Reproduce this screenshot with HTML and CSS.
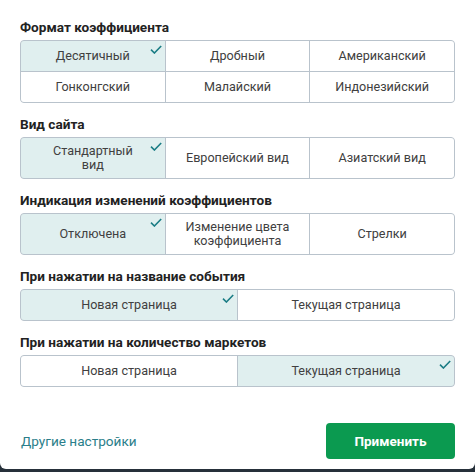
FILE: index.html
```html
<!DOCTYPE html>
<html lang="ru">
<head>
<meta charset="utf-8">
<title>Настройки</title>
<link rel="stylesheet" href="styles.css">
</head>
<body>
<div class="panel">
  <section class="group">
    <h3 class="title">Формат коэффициента</h3>
    <div class="opts cols3">
      <div class="opt sel">Десятичный<svg class="check" viewBox="0 0 12 9"><path d="M1 4.6 L4.4 8 L11.2 1"/></svg></div>
      <div class="opt">Дробный</div>
      <div class="opt">Американский</div>
      <div class="opt">Гонконгский</div>
      <div class="opt">Малайский</div>
      <div class="opt">Индонезийский</div>
    </div>
  </section>
  <section class="group">
    <h3 class="title">Вид сайта</h3>
    <div class="opts cols3 tall">
      <div class="opt sel">Стандартный<br>вид<svg class="check" viewBox="0 0 12 9"><path d="M1 4.6 L4.4 8 L11.2 1"/></svg></div>
      <div class="opt">Европейский вид</div>
      <div class="opt">Азиатский вид</div>
    </div>
  </section>
  <section class="group">
    <h3 class="title">Индикация изменений коэффициентов</h3>
    <div class="opts cols3 tall">
      <div class="opt sel">Отключена<svg class="check" viewBox="0 0 12 9"><path d="M1 4.6 L4.4 8 L11.2 1"/></svg></div>
      <div class="opt">Изменение цвета<br>коэффициента</div>
      <div class="opt">Стрелки</div>
    </div>
  </section>
  <section class="group">
    <h3 class="title">При нажатии на название события</h3>
    <div class="opts cols2">
      <div class="opt sel">Новая страница<svg class="check" viewBox="0 0 12 9"><path d="M1 4.6 L4.4 8 L11.2 1"/></svg></div>
      <div class="opt">Текущая страница</div>
    </div>
  </section>
  <section class="group">
    <h3 class="title">При нажатии на количество маркетов</h3>
    <div class="opts cols2">
      <div class="opt">Новая страница</div>
      <div class="opt sel">Текущая страница<svg class="check" viewBox="0 0 12 9"><path d="M1 4.6 L4.4 8 L11.2 1"/></svg></div>
    </div>
  </section>
  <footer class="footer">
    <a class="more" href="#">Другие настройки</a>
    <button class="apply" type="button">Применить</button>
  </footer>
</div>
</body>
</html>
```

FILE: styles.css
```css
html, body {
  margin: 0;
  padding: 0;
}
body {
  background: #26303a;
  font-family: Roboto, "Liberation Sans", Arial, sans-serif;
  width: 475px;
  height: 472px;
  overflow: hidden;
}
.panel {
  box-sizing: border-box;
  width: 475px;
  height: 469px;
  background: #fff;
  border-radius: 0 0 6px 6px;
  padding: 19px 20px 0 20px;
  display: flex;
  flex-direction: column;
}
.group {
  margin-bottom: 13px;
}
.title {
  margin: 0 0 5px 0;
  font-size: 13.6px;
  line-height: 16px;
  font-weight: 700;
  color: #222;
}
.opts {
  display: grid;
  gap: 1px;
  background: #b9c3cc;
  border: 1px solid #b9c3cc;
  border-radius: 4px;
  overflow: hidden;
}
.cols3 {
  grid-template-columns: 1fr 1fr 1fr;
}
.cols2 {
  grid-template-columns: 1fr 1fr;
}
.opt {
  position: relative;
  background: #fff;
  min-height: 30px;
  display: flex;
  align-items: center;
  justify-content: center;
  text-align: center;
  font-size: 12.6px;
  line-height: 14px;
  color: #404040;
}
.tall .opt {
  min-height: 40px;
}
.opt.sel {
  background: #e0efef;
}
.check {
  position: absolute;
  top: 4px;
  right: 3px;
  width: 12px;
  height: 9px;
  fill: none;
  stroke: #1b7d85;
  stroke-width: 1.6;
}
.footer {
  margin-top: 23px;
  display: flex;
  align-items: center;
  justify-content: space-between;
}
.more {
  color: #2a7e8a;
  font-size: 13.6px;
  text-decoration: none;
  margin-left: 1px;
}
.apply {
  width: 129px;
  height: 36px;
  border: none;
  border-radius: 4px;
  background: #0b9a50;
  color: #fff;
  font-family: Roboto, "Liberation Sans", Arial, sans-serif;
  font-size: 13.5px;
  font-weight: 700;
  cursor: pointer;
}
```
